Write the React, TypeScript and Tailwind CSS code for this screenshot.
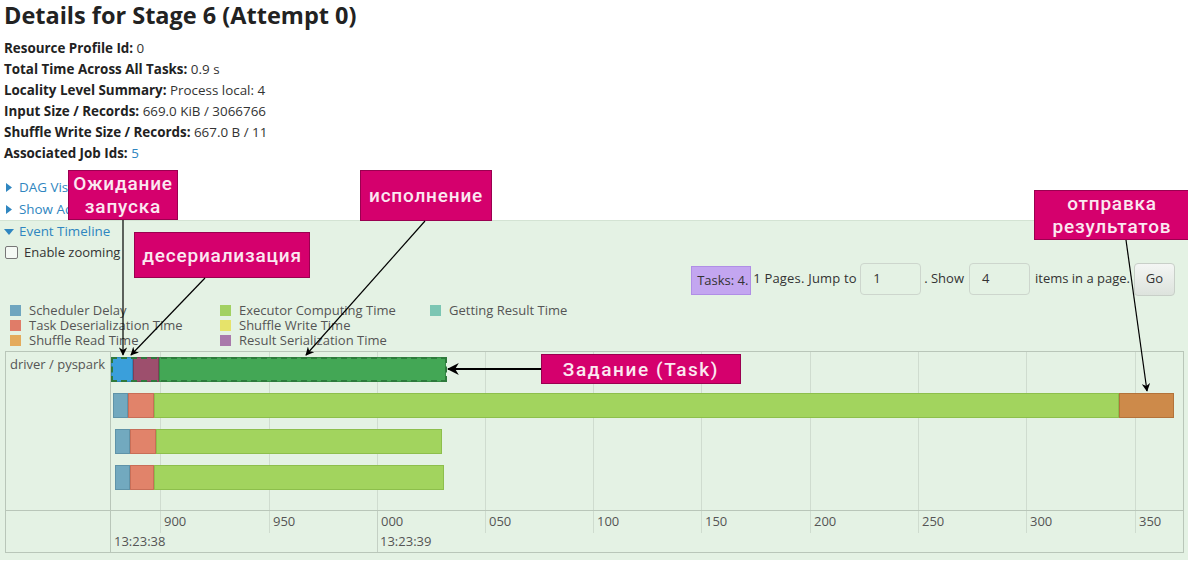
import React from 'react';

type Seg = { l: number; w: number; c: string; b: string };

const rows: { top: number; segs: Seg[]; dashed?: boolean }[] = [
  {
    top: 5,
    dashed: true,
    segs: [
      { l: 0, w: 22, c: '#3a9fdb', b: '#2f86bd' },
      { l: 22, w: 26, c: '#9d4f6d', b: '#7f3f58' },
      { l: 48, w: 287, c: '#43a755', b: '#358a45' },
    ],
  },
  {
    top: 41,
    segs: [
      { l: 2, w: 15, c: '#72a9bf', b: '#5f93a8' },
      { l: 17, w: 26, c: '#e1836a', b: '#c86e57' },
      { l: 43, w: 965, c: '#a2d45e', b: '#8dbf4c' },
      { l: 1008, w: 55, c: '#cd8a4a', b: '#b3733a' },
    ],
  },
  {
    top: 77,
    segs: [
      { l: 4, w: 15, c: '#72a9bf', b: '#5f93a8' },
      { l: 19, w: 26, c: '#e1836a', b: '#c86e57' },
      { l: 45, w: 286, c: '#a2d45e', b: '#8dbf4c' },
    ],
  },
  {
    top: 113,
    segs: [
      { l: 4, w: 15, c: '#72a9bf', b: '#5f93a8' },
      { l: 19, w: 24, c: '#e1836a', b: '#c86e57' },
      { l: 43, w: 290, c: '#a2d45e', b: '#8dbf4c' },
    ],
  },
];

const grid = [49, 158, 266, 374, 482, 590, 699, 807, 915, 1024];
const labels = ['900', '950', '000', '050', '100', '150', '200', '250', '300', '350'];

const legend: [string, string][][] = [
  [
    ['#6fa6bf', 'Scheduler Delay'],
    ['#e07c68', 'Task Deserialization Time'],
    ['#e4ab5c', 'Shuffle Read Time'],
  ],
  [
    ['#a2d162', 'Executor Computing Time'],
    ['#e6e36a', 'Shuffle Write Time'],
    ['#a97aab', 'Result Serialization Time'],
  ],
  [['#7cc6b3', 'Getting Result Time']],
];

function TriRight() {
  return (
    <svg width="6" height="9" viewBox="0 0 6 9" className="mr-[7px] ml-[6px]">
      <path d="M0 0 L6 4.5 L0 9 Z" fill="#2f86c0" />
    </svg>
  );
}

function TriDown() {
  return (
    <svg width="10" height="6" viewBox="0 0 10 6" className="mr-[5px] ml-[4px]">
      <path d="M0 0 L10 0 L5 6 Z" fill="#2f86c0" />
    </svg>
  );
}

const annoCls =
  "absolute flex flex-col items-center justify-center bg-[#d5006d] border border-[#9a0050] text-[#fbe8f1] font-['Roboto'] font-medium text-[19px] leading-[23px] tracking-[0.8px]";

export default function App() {
  return (
    <div className="relative w-[1188px] h-[565px] overflow-hidden bg-white font-['Open_Sans',sans-serif] text-[#333]">
      <div className="px-[4px]">
        <h3 className="text-[23.5px] leading-[30px] font-bold text-[#222]">Details for Stage 6 (Attempt 0)</h3>
        <ul className="mt-[8px] text-[13.4px] leading-[21px]">
          <li>
            <strong className="text-[#222]">Resource Profile Id:</strong> 0
          </li>
          <li>
            <strong className="text-[#222]">Total Time Across All Tasks:</strong> 0.9 s
          </li>
          <li>
            <strong className="text-[#222]">Locality Level Summary:</strong> Process local: 4
          </li>
          <li>
            <strong className="text-[#222]">Input Size / Records:</strong> 669.0 KiB / 3066766
          </li>
          <li>
            <strong className="text-[#222]">Shuffle Write Size / Records:</strong> 667.0 B / 11
          </li>
          <li>
            <strong className="text-[#222]">Associated Job Ids:</strong> <span className="text-[#2f86c0]">5</span>
          </li>
        </ul>
      </div>
      <div className="mt-[12px] text-[13.4px] leading-[22px] text-[#2f86c0]">
        <div className="flex items-center">
          <TriRight />
          <span>DAG Visualization</span>
        </div>
        <div className="flex items-center">
          <TriRight />
          <span>Show Additional Metrics</span>
        </div>
      </div>
      <div className="h-[340px] bg-[#e4f2e4] border-t border-[#d3e3d3]">
        <div className="flex items-center h-[21px] text-[13.4px] text-[#2f86c0]">
          <TriDown />
          <span>Event Timeline</span>
        </div>
        <div className="flex items-center h-[21px] text-[13px] text-[#333]">
          <span className="ml-[5px] mr-[6px] w-[13px] h-[13px] border border-[#777] rounded-[2px] bg-[#f4f9f4]"></span>
          <span>Enable zooming</span>
        </div>
        <div className="flex justify-end items-center h-[32px] pr-[13px] text-[13px] text-[#333]">
          <span className="flex items-center w-[60px] h-[29px] mt-[3px] pl-[5px] bg-[#c3a6f0] border border-[#b08ee6]">Tasks: 4.</span>
          <span className="ml-[2px] w-[105px] tracking-[0.2px]">1 Pages. Jump to</span>
          <span className="ml-[2px] flex items-center w-[61px] h-[32px] pl-[12px] border border-[#cdd6cd] rounded-[4px]">1</span>
          <span className="ml-[3px]">. Show</span>
          <span className="ml-[5px] flex items-center w-[61px] h-[32px] pl-[12px] border border-[#cdd6cd] rounded-[4px]">4</span>
          <span className="ml-[5px]">items in a page.</span>
          <span className="ml-[4px] flex items-center justify-center w-[41px] h-[33px] border border-[#c8cfc8] rounded-[4px] bg-gradient-to-b from-[#f4f6f4] to-[#dde3dd]">
            Go
          </span>
        </div>
        <div className="mt-[8px] ml-[10px] flex text-[13px] leading-[15px] text-[#555]">
          {legend.map((col, i) => (
            <div key={i} className="w-[210px] flex flex-col">
              {col.map(([c, t]) => (
                <div key={t} className="flex items-center h-[15px]">
                  <span className="w-[11px] h-[11px] mr-[8px]" style={{ backgroundColor: c }}></span>
                  <span>{t}</span>
                </div>
              ))}
            </div>
          ))}
        </div>
        <div className="mt-[3px] ml-[5px] w-[1179px] border border-[#b9c6b9] flex flex-col">
          <div className="flex h-[159px] border-b border-[#b9c6b9]">
            <div className="w-[105px] border-r border-[#b9c6b9] pl-[4px] pt-[3px] text-[13px] leading-[18px] text-[#555]">
              driver / pyspark
            </div>
            <div className="relative flex-1">
              {grid.map((x) => (
                <div key={x} className="absolute top-0 bottom-0 w-px bg-[#cfdccf]" style={{ left: x }}></div>
              ))}
              {rows.map((r, i) => (
                <div key={i}>
                  {r.segs.map((s, j) => (
                    <div
                      key={j}
                      className="absolute h-[25px] border"
                      style={{ left: s.l, top: r.top, width: s.w, backgroundColor: s.c, borderColor: s.b }}
                    ></div>
                  ))}
                  {r.dashed && (
                    <div
                      className="absolute h-[25px] border-2 border-dashed border-[#2e7a3c]"
                      style={{ left: 0, top: r.top, width: 336 }}
                    ></div>
                  )}
                </div>
              ))}
            </div>
          </div>
          <div className="flex h-[41px]">
            <div className="w-[105px] border-r border-[#b9c6b9]"></div>
            <div className="relative flex-1 text-[13px] leading-[16px] text-[#555]">
              {grid.map((x, i) => (
                <div
                  key={x}
                  className={i === 2 ? 'absolute top-0 bottom-0 w-px bg-[#c4d0c4]' : 'absolute top-0 h-[22px] w-px bg-[#cfdccf]'}
                  style={{ left: x }}
                ></div>
              ))}
              {labels.map((t, i) => (
                <span key={t} className="absolute top-[2px]" style={{ left: grid[i] + 4 }}>
                  {t}
                </span>
              ))}
              <span className="absolute top-[22px] left-[3px]">13:23:38</span>
              <span className="absolute top-[22px] left-[269px]">13:23:39</span>
            </div>
          </div>
        </div>
      </div>

      {/* annotations */}
      <div className={annoCls + ' left-[68px] top-[170px] w-[110px] h-[50px]'}>
        <span>Ожидание</span>
        <span>запуска</span>
      </div>
      <div className={annoCls + ' left-[134px] top-[232px] w-[176px] h-[46px]'}>
        <span>десериализация</span>
      </div>
      <div className={annoCls + ' left-[360px] top-[170px] w-[132px] h-[51px]'}>
        <span>исполнение</span>
      </div>
      <div className={annoCls + ' left-[1034px] top-[190px] w-[156px] h-[50px]'}>
        <span>отправка</span>
        <span>результатов</span>
      </div>
      <div className={annoCls + ' left-[541px] top-[354px] w-[200px] h-[30px] tracking-[1.6px]'}>
        <span>Задание (Task)</span>
      </div>

      <svg className="absolute left-0 top-0 pointer-events-none" width="1188" height="565" viewBox="0 0 1188 565">
        <defs>
          <marker id="ah" viewBox="0 0 10 10" refX="9" refY="5" markerWidth="7" markerHeight="7" orient="auto">
            <path d="M0 0 L10 5 L0 10 L3 5 Z" fill="#000" />
          </marker>
          <marker id="ah2" viewBox="0 0 10 10" refX="9" refY="5" markerWidth="6" markerHeight="6" orient="auto">
            <path d="M0 0 L10 5 L0 10 L3 5 Z" fill="#000" />
          </marker>
        </defs>
        <line x1="123" y1="220" x2="123" y2="355" stroke="#000" strokeWidth="1.2" markerEnd="url(#ah)" />
        <line x1="205" y1="278" x2="131" y2="355" stroke="#000" strokeWidth="1.2" markerEnd="url(#ah)" />
        <line x1="425" y1="221" x2="306" y2="355" stroke="#000" strokeWidth="1.2" markerEnd="url(#ah)" />
        <line x1="1126" y1="240" x2="1147" y2="391" stroke="#000" strokeWidth="1.2" markerEnd="url(#ah)" />
        <line x1="541" y1="369" x2="448" y2="369" stroke="#000" strokeWidth="2" markerEnd="url(#ah2)" />
      </svg>
    </div>
  );
}
